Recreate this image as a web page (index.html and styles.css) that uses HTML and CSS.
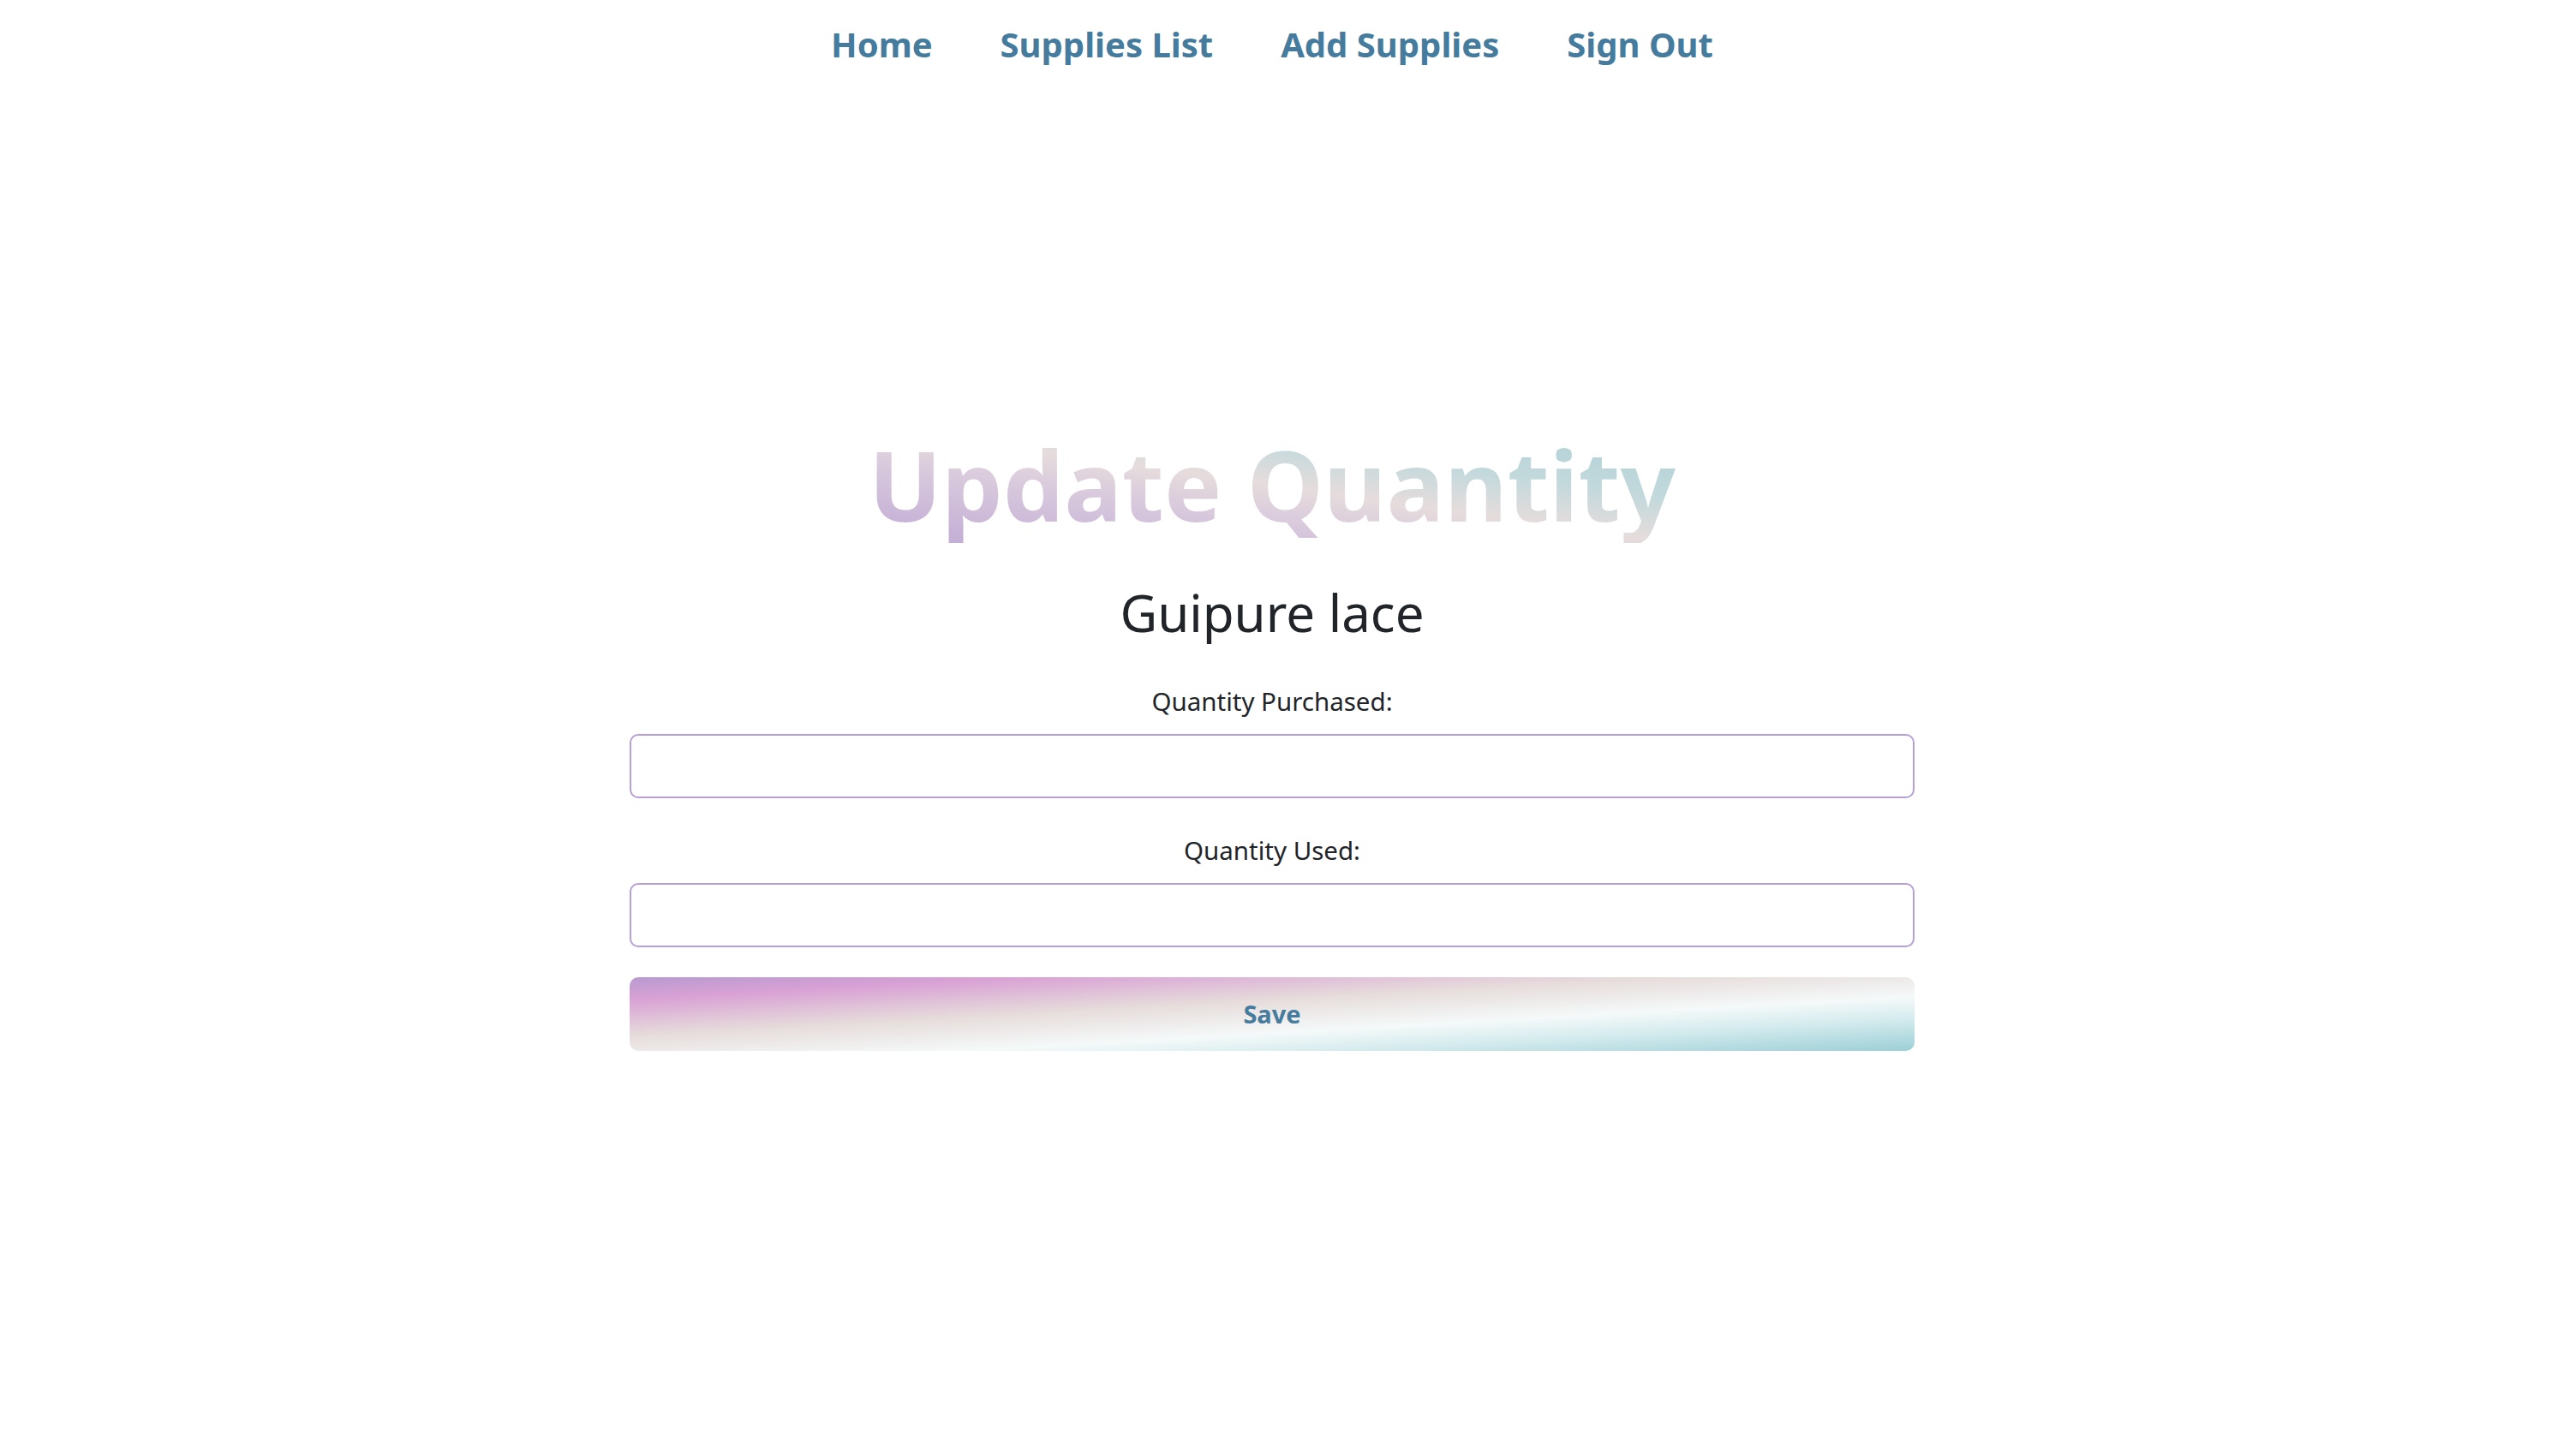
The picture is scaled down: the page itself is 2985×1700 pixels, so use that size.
FILE: index.html
```html
<!DOCTYPE html>
<html lang="en">
<head>
<meta charset="utf-8">
<title>Update Quantity</title>
<link rel="stylesheet" href="styles.css">
</head>
<body>
<nav class="nav">
  <a class="nav-link" href="#">Home</a>
  <a class="nav-link" href="#">Supplies List</a>
  <a class="nav-link" href="#">Add Supplies</a>
  <a class="nav-link" href="#">Sign Out</a>
</nav>
<main class="main">
  <h1 class="title">Update Quantity</h1>
  <h2 class="item-name">Guipure lace</h2>
  <form class="form">
    <label class="label" for="purchased">Quantity Purchased:</label>
    <input class="input" id="purchased" type="text">
    <label class="label label-used" for="used">Quantity Used:</label>
    <input class="input" id="used" type="text">
    <button class="save" type="button">Save</button>
  </form>
</main>
</body>
</html>
```

FILE: styles.css
```css
html, body {
  margin: 0;
  padding: 0;
  background: #ffffff;
}

body {
  padding-right: 15px;
  font-family: "Noto Sans", "Open Sans", sans-serif;
  color: #212529;
}

.nav {
  display: flex;
  justify-content: center;
  gap: 79px;
  padding-top: 24px;
}

.nav-link {
  font-size: 40px;
  line-height: 56px;
  font-weight: 700;
  color: #457b9d;
  text-decoration: none;
}

.main {
  width: 1500px;
  margin: 0 auto;
  padding-top: 418px;
  text-align: center;
}

.title {
  display: inline-block;
  margin: 0;
  font-size: 113px;
  line-height: 1.2;
  font-weight: 700;
  background: linear-gradient(to top right, #c0a9d4 0%, #d9cadd 35%, #e6dcdc 50%, #c3d9dc 68%, #aacfd4 100%);
  -webkit-background-clip: text;
  background-clip: text;
  color: transparent;
}

.item-name {
  margin: 45px 0 0;
  font-size: 60px;
  line-height: 72px;
  font-weight: 400;
}

.form {
  display: flex;
  flex-direction: column;
  margin-top: 47px;
}

.label {
  font-size: 29.5px;
  line-height: 42px;
  margin-bottom: 17px;
}

.label-used {
  margin-top: 40px;
}

.input {
  box-sizing: border-box;
  width: 100%;
  height: 75px;
  border: 2px solid #b79fd4;
  border-radius: 10px;
  background: #ffffff;
  outline: none;
  font-family: inherit;
  font-size: 28px;
  padding: 0 20px;
}

.save {
  margin-top: 35px;
  height: 86px;
  width: 100%;
  border: none;
  border-radius: 10px;
  background: linear-gradient(to bottom right, #b79ad0 0%, #d9a1d5 15%, #e6dcdb 40%, #f5f9f9 63%, #d4ebee 78%, #9bcfd6 100%);
  font-family: inherit;
  font-size: 29px;
  font-weight: 700;
  color: #457b9d;
  cursor: pointer;
}
```
